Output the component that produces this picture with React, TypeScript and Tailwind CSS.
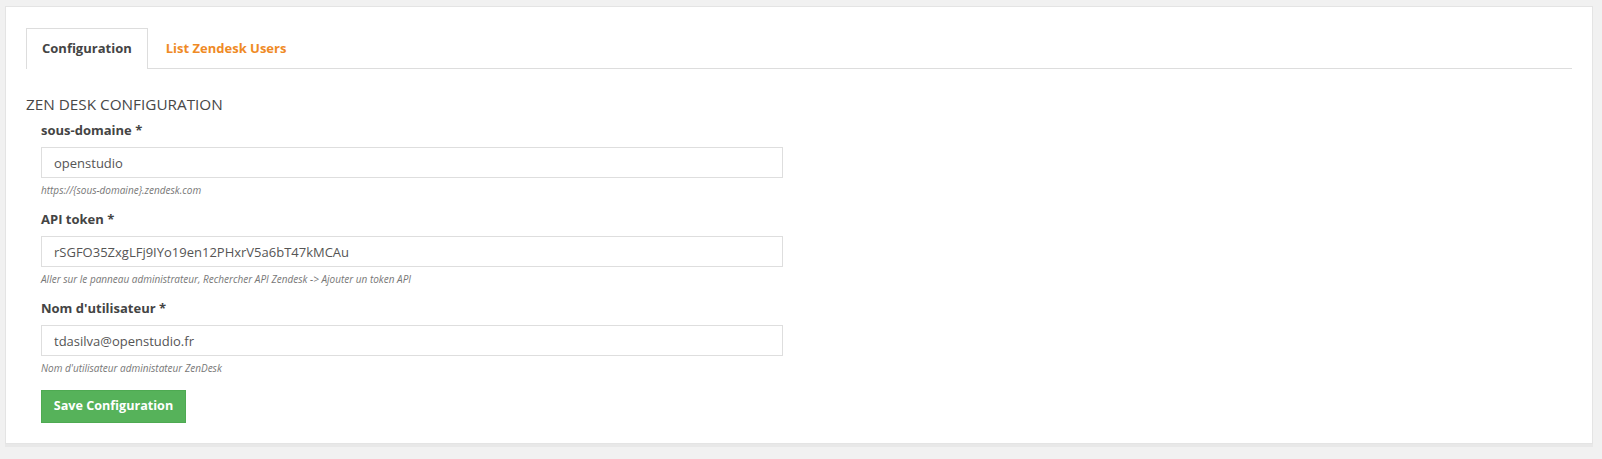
import { useState } from 'react';

const fields = [
  {
    label: 'sous-domaine *',
    value: 'openstudio',
    help: 'https://{sous-domaine}.zendesk.com',
  },
  {
    label: 'API token *',
    value: 'rSGFO35ZxgLFj9IYo19en12PHxrV5a6bT47kMCAu',
    help: 'Aller sur le panneau administrateur, Rechercher API Zendesk -> Ajouter un token API',
  },
  {
    label: "Nom d'utilisateur *",
    value: 'tdasilva@openstudio.fr',
    help: "Nom d'utilisateur administateur ZenDesk",
  },
];

const App = () => {
  const [tab, setTab] = useState('config');
  const [values, setValues] = useState(fields.map((f) => f.value));

  return (
    <div className="min-h-[459px] bg-[#f1f1f1] pt-[6px] pl-[5px] pr-[9px] pb-[15px] font-['Open_Sans',sans-serif]">
      <div className="bg-white border border-[#e4e4e4] shadow-[0_3px_0_#e8e8e8] pt-[21px] px-[20px] pb-[20px]">
        {/* onglets */}
        <div className="flex border-b border-[#dddddd] h-[41px]">
          <button
            onClick={() => setTab('config')}
            className={`px-[15px] h-[41px] mr-[2px] text-[13px] font-bold border border-b-0 ${
              tab === 'config'
                ? 'bg-white border-[#dddddd] text-[#444444] -mb-px'
                : 'border-transparent text-[#ef8a25]'
            }`}
          >
            Configuration
          </button>
          <button
            onClick={() => setTab('users')}
            className={`px-[15px] h-[41px] text-[13px] font-bold border border-b-0 ${
              tab === 'users'
                ? 'bg-white border-[#dddddd] text-[#444444] -mb-px'
                : 'border-transparent text-[#ef8a25]'
            }`}
          >
            List Zendesk Users
          </button>
        </div>

        <h4 className="mt-[26px] mb-[8px] text-[15.3px] leading-[18px] text-[#484848] uppercase">
          Zen Desk Configuration
        </h4>

        <div className="pl-[15px]">
          {fields.map((f, i) => (
            <div key={f.label} className="mb-[13px]">
              <label className="block text-[13px] leading-[18px] font-bold text-[#444444] mb-[8px]">
                {f.label}
              </label>
              <input
                value={values[i]}
                onChange={(e) =>
                  setValues(values.map((v, j) => (j === i ? e.target.value : v)))
                }
                className="block w-[742px] h-[31px] px-[12px] border border-[#dedede] text-[13px] text-[#555555] outline-none"
              />
              <p className="mt-[5px] text-[10px] leading-[14px] italic text-[#777777]">
                {f.help}
              </p>
            </div>
          ))}

          <button className="mt-[2px] w-[145px] h-[33px] bg-[#56b25a] border border-[#4eaa52] text-white text-[12.6px] font-bold">
            Save Configuration
          </button>
        </div>
      </div>
    </div>
  );
};

export default App;
